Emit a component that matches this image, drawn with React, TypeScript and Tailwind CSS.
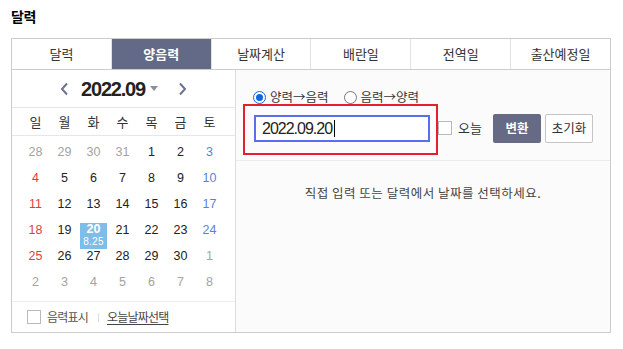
import React from 'react';

const TABS = ['달력', '양음력', '날짜계산', '배란일', '전역일', '출산예정일'];
const WEEKDAYS = ['일', '월', '화', '수', '목', '금', '토'];

type Day = { d: number; other?: boolean };

const WEEKS: Day[][] = [
    [{ d: 28, other: true }, { d: 29, other: true }, { d: 30, other: true }, { d: 31, other: true }, { d: 1 }, { d: 2 }, { d: 3 }],
    [{ d: 4 }, { d: 5 }, { d: 6 }, { d: 7 }, { d: 8 }, { d: 9 }, { d: 10 }],
    [{ d: 11 }, { d: 12 }, { d: 13 }, { d: 14 }, { d: 15 }, { d: 16 }, { d: 17 }],
    [{ d: 18 }, { d: 19 }, { d: 20 }, { d: 21 }, { d: 22 }, { d: 23 }, { d: 24 }],
    [{ d: 25 }, { d: 26 }, { d: 27 }, { d: 28 }, { d: 29 }, { d: 30 }, { d: 1, other: true }],
    [{ d: 2, other: true }, { d: 3, other: true }, { d: 4, other: true }, { d: 5, other: true }, { d: 6, other: true }, { d: 7, other: true }, { d: 8, other: true }],
];

const dayColor = (day: Day, col: number) => {
    if (day.other) return 'text-[#a3a3a3]';
    if (col === 0) return 'text-[#e8383d]';
    if (col === 6) return 'text-[#5b7fe0]';
    return 'text-[#222]';
};

const Chevron = ({ dir }: { dir: 'left' | 'right' }) => (
    <svg width="9" height="14" viewBox="0 0 9 14" fill="none">
        <path
            d={dir === 'left' ? 'M7 1.5 2 7l5 5.5' : 'M2 1.5 7 7l-5 5.5'}
            stroke="#6d7290"
            strokeWidth="2"
        />
    </svg>
);

const Box = () => <span className="block w-[14px] h-[14px] border border-[#b9b9b9] bg-white" />;

export default function App() {
    return (
        <div className="w-[623px] h-[349px] bg-white pl-[11px] pt-[7px] font-['Noto_Sans_CJK_KR',sans-serif] text-[#333]">
            <h1 className="text-[14px] font-bold leading-[18px] text-black tracking-[-0.5px]">달력</h1>

            <div className="mt-[13px] w-[600px] border border-[#cccccc]">
                {/* tabs */}
                <div className="flex h-[31px] border-b border-[#cccccc]">
                    {TABS.map((tab, i) => (
                        <div
                            key={tab}
                            className={`flex-1 flex items-center justify-center text-[13px] ${i > 0 ? 'border-l border-[#e2e2e2]' : ''} ${i === 1 ? 'bg-[#636a87] text-white font-bold border-[#636a87]' : 'text-[#333]'}`}
                        >
                            {tab}
                        </div>
                    ))}
                </div>

                <div className="flex h-[262px]">
                    {/* calendar */}
                    <div className="w-[224px] border-r border-[#dddddd] flex flex-col bg-white">
                        <div className="h-[38px] border-b border-[#e6e6e6] flex items-center justify-center">
                            <Chevron dir="left" />
                            <span className="ml-[12px] font-['Liberation_Sans',sans-serif] text-[20px] font-bold tracking-[-1.2px] text-[#222]">
                                2022.09
                            </span>
                            <svg className="ml-[5px]" width="8" height="5" viewBox="0 0 8 5">
                                <path d="M0 0h8L4 5z" fill="#8a8ea3" />
                            </svg>
                            <span className="ml-[20px]">
                                <Chevron dir="right" />
                            </span>
                        </div>

                        <div className="h-[28px] border-b border-[#e6e6e6] grid grid-cols-[repeat(7,29px)] pl-[9px] items-center text-[13px] text-[#333]">
                            {WEEKDAYS.map(w => (
                                <span key={w} className="text-center">{w}</span>
                            ))}
                        </div>

                        <div className="flex-1 pt-[3px] pl-[9px]">
                            {WEEKS.map((week, r) => (
                                <div key={r} className="grid grid-cols-[repeat(7,29px)] h-[26px]">
                                    {week.map((day, c) => {
                                        const selected = r === 3 && c === 2;
                                        return (
                                            <div key={c} className="relative flex justify-center">
                                                {selected ? (
                                                    <div className="absolute top-[6px] left-[1px] w-[27px] h-[26px] bg-[#7dbde8] flex flex-col items-center text-white font-['Liberation_Sans',sans-serif]">
                                                        <span className="text-[12.5px] font-bold leading-[14px] -mt-[1px]">{day.d}</span>
                                                        <span className="text-[10px] leading-[12px] tracking-[0.3px]">8.25</span>
                                                    </div>
                                                ) : (
                                                    <span className={`font-['Liberation_Sans',sans-serif] text-[12.5px] leading-[26px] ${dayColor(day, c)}`}>
                                                        {day.d}
                                                    </span>
                                                )}
                                            </div>
                                        );
                                    })}
                                </div>
                            ))}
                        </div>

                        <div className="h-[31px] border-t border-[#ececec] flex items-center pl-[15px] text-[12px] tracking-[-0.8px] text-[#555]">
                            <Box />
                            <span className="ml-[6px]">음력표시</span>
                            <span className="ml-[10px] w-px h-[9px] bg-[#dddddd]" />
                            <span className="ml-[8px] underline underline-offset-2 text-[#444]">오늘날짜선택</span>
                        </div>
                    </div>

                    {/* converter */}
                    <div className="flex-1 bg-[#fbfbfb] flex flex-col">
                        <div className="h-[91px] border-b border-[#ebebeb] pt-[21px] pl-[7px]">
                            <div className="ml-[10px] h-[13px] flex items-center text-[12.5px] text-[#333]">
                                <span className="w-[13px] h-[13px] rounded-full border-[1.5px] border-[#1166dd] bg-white flex items-center justify-center">
                                    <span className="w-[7px] h-[7px] rounded-full bg-[#1166dd]" />
                                </span>
                                <span className="ml-[4px]">양력→음력</span>
                                <span className="ml-[15px] w-[13px] h-[13px] rounded-full border border-[#777] bg-white" />
                                <span className="ml-[4px]">음력→양력</span>
                            </div>

                            <div className="flex items-center">
                                <div className="w-[195px] h-[51px] border-2 border-[#e5202e] pt-[9px] pl-[9px]">
                                    <div className="w-[176px] h-[27px] border-2 border-[#5b6ee9] bg-white flex items-center pl-[6px] font-['Liberation_Sans',sans-serif] text-[16px] tracking-[-1px] text-[#222]">
                                        2022.09.20
                                        <span className="ml-[2px] w-px h-[17px] bg-black" />
                                    </div>
                                </div>
                                <span className="-mt-[4px]"><Box /></span>
                                <span className="ml-[6px] -mt-[4px] text-[13px] text-[#333]">오늘</span>
                                <button className="ml-[11px] -mt-[3px] w-[48px] h-[29px] rounded-[2px] bg-[#666a85] text-white text-[12.5px] font-bold">
                                    변환
                                </button>
                                <button className="ml-[4px] -mt-[3px] w-[48px] h-[29px] rounded-[2px] bg-white border border-[#c4c4c4] text-[#333] text-[12.5px]">
                                    초기화
                                </button>
                            </div>
                        </div>

                        <div className="pt-[23px] text-center text-[12.5px] leading-[18px] text-[#444] tracking-[0.5px]">
                            직접 입력 또는 달력에서 날짜를 선택하세요.
                        </div>
                    </div>
                </div>
            </div>
        </div>
    );
}
